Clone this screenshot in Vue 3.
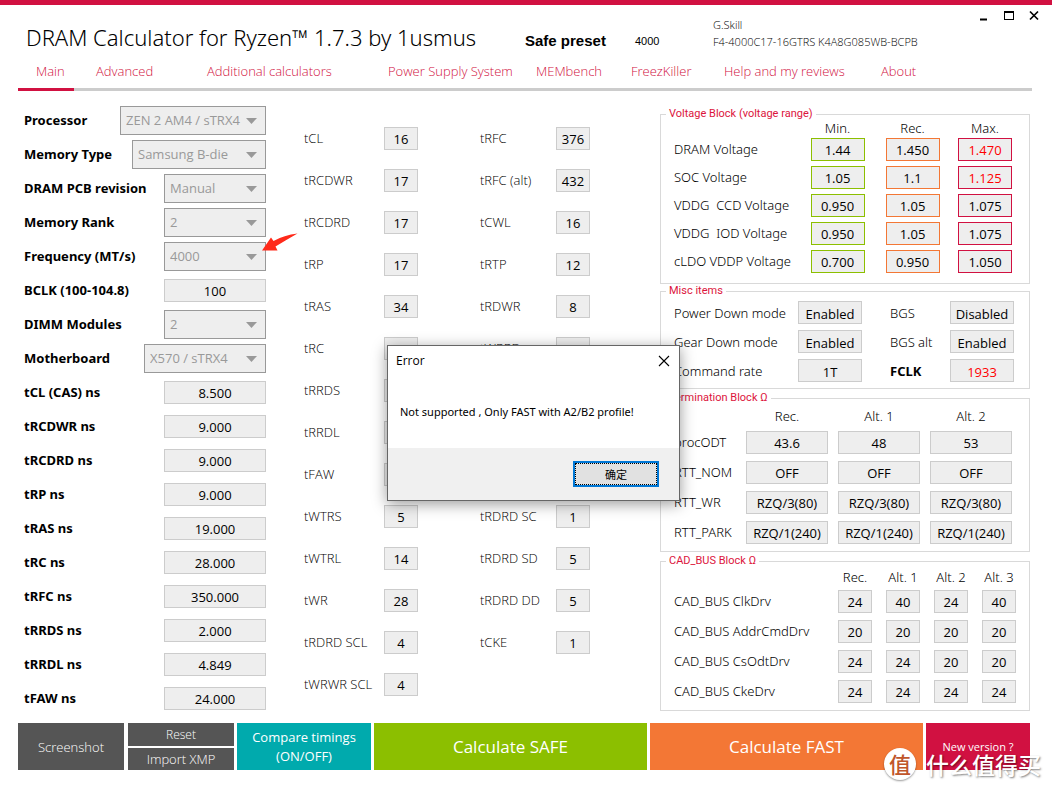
<script setup>
import { ref } from 'vue'

const tabs = [
  'Main',
  'Advanced',
  'Additional calculators',
  'Power Supply System',
  'MEMbench',
  'FreezKiller',
  'Help and my reviews',
  'About',
]

const settings = [
  { id: 'cpu', label: 'Processor', value: 'ZEN 2 AM4 / sTRX4', select: 'wide' },
  { id: 'memtype', label: 'Memory Type', value: 'Samsung B-die', select: 'type' },
  { id: 'pcb', label: 'DRAM PCB revision', value: 'Manual', select: 'std' },
  { id: 'rank', label: 'Memory Rank', value: '2', select: 'std' },
  { id: 'freq', label: 'Frequency (MT/s)', value: '4000', select: 'std', arrow: true },
  { id: 'bclk', label: 'BCLK (100-104.8)', value: '100' },
  { id: 'dimm', label: 'DIMM Modules', value: '2', select: 'std' },
  { id: 'board', label: 'Motherboard', value: 'X570 / sTRX4', select: 'board' },
  { id: 'tclns', label: 'tCL (CAS) ns', value: '8.500' },
  { id: 'trcdwrns', label: 'tRCDWR ns', value: '9.000' },
  { id: 'trcdrdns', label: 'tRCDRD ns', value: '9.000' },
  { id: 'trpns', label: 'tRP ns', value: '9.000' },
  { id: 'trasns', label: 'tRAS ns', value: '19.000' },
  { id: 'trcns', label: 'tRC ns', value: '28.000' },
  { id: 'trfcns', label: 'tRFC ns', value: '350.000' },
  { id: 'trrdsns', label: 'tRRDS ns', value: '2.000' },
  { id: 'trrdlns', label: 'tRRDL ns', value: '4.849' },
  { id: 'tfawns', label: 'tFAW ns', value: '24.000' },
]

const timings = [
  [
    ['tCL', '16'], ['tRCDWR', '17'], ['tRCDRD', '17'], ['tRP', '17'], ['tRAS', '34'],
    ['tRC', '54'], ['tRRDS', '4'], ['tRRDL', '6'], ['tFAW', '16'], ['tWTRS', '5'],
    ['tWTRL', '14'], ['tWR', '28'], ['tRDRD SCL', '4'], ['tWRWR SCL', '4'],
  ],
  [
    ['tRFC', '376'], ['tRFC (alt)', '432'], ['tCWL', '16'], ['tRTP', '12'], ['tRDWR', '8'],
    ['tWRRD', '4'], ['tWRWR SC', '1'], ['tWRWR SD', '7'], ['tWRWR DD', '7'], ['tRDRD SC', '1'],
    ['tRDRD SD', '5'], ['tRDRD DD', '5'], ['tCKE', '1'],
  ],
]

const voltages = [
  ['DRAM Voltage', '1.44', '1.450', '1.470', true],
  ['SOC Voltage', '1.05', '1.1', '1.125', true],
  ['VDDG\u00a0 CCD Voltage', '0.950', '1.05', '1.075', false],
  ['VDDG\u00a0 IOD Voltage', '0.950', '1.05', '1.075', false],
  ['cLDO VDDP Voltage', '0.700', '0.950', '1.050', false],
]

const misc = [
  { label: 'Power Down mode', value: 'Enabled' },
  { label: 'BGS', value: 'Disabled' },
  { label: 'Gear Down mode', value: 'Enabled' },
  { label: 'BGS alt', value: 'Enabled' },
  { label: 'Command rate', value: '1T' },
  { label: 'FCLK', value: '1933', strong: true },
]

const termination = [
  ['procODT', '43.6', '48', '53'],
  ['RTT_NOM', 'OFF', 'OFF', 'OFF'],
  ['RTT_WR', 'RZQ/3(80)', 'RZQ/3(80)', 'RZQ/3(80)'],
  ['RTT_PARK', 'RZQ/1(240)', 'RZQ/1(240)', 'RZQ/1(240)'],
]

const cadBus = [
  ['CAD_BUS ClkDrv', '24', '40', '24', '40'],
  ['CAD_BUS AddrCmdDrv', '20', '20', '20', '20'],
  ['CAD_BUS CsOdtDrv', '24', '24', '20', '20'],
  ['CAD_BUS CkeDrv', '24', '24', '24', '24'],
]

const termHeads = ['Rec.', 'Alt. 1', 'Alt. 2']
const cadHeads = ['Rec.', 'Alt. 1', 'Alt. 2', 'Alt. 3']

const showError = ref(true)
</script>

<template>
  <div class="window">
    <header class="titlebar">
      <h1>DRAM Calculator for Ryzen™ 1.7.3 by 1usmus</h1>
      <strong class="preset">Safe preset</strong>
      <span class="speed">4000</span>
      <div class="module">
        <div>G.Skill</div>
        <div>F4-4000C17-16GTRS K4A8G085WB-BCPB</div>
      </div>
      <div class="controls">
        <button type="button" aria-label="Minimize">
          <svg width="12" height="12" viewBox="0 0 12 12"><path d="M3 8.5h7v2H3z" /></svg>
        </button>
        <button type="button" aria-label="Maximize">
          <svg width="12" height="12" viewBox="0 0 12 12"><path d="M1 1h10v9H1zM2 3v6h8V3z" fill-rule="evenodd" /></svg>
        </button>
        <button type="button" aria-label="Close">
          <svg width="12" height="12" viewBox="0 0 12 12"><path d="M2 1.5l8 8M10 1.5l-8 8" stroke="#000" stroke-width="1.7" /></svg>
        </button>
      </div>
    </header>

    <nav class="tabs">
      <a v-for="(tab, i) in tabs" :key="tab" href="#" :class="{ active: i === 0 }">{{ tab }}</a>
    </nav>

    <main>
      <section class="settings">
        <div v-for="s in settings" :key="s.id" class="setting">
          <label :for="s.id">{{ s.label }}</label>
          <div v-if="s.select" class="select" :class="s.select">
            <select :id="s.id" disabled>
              <option>{{ s.value }}</option>
            </select>
            <svg class="caret" width="11" height="6" viewBox="0 0 11 6"><path d="M0 0h11L5.5 6z" /></svg>
            <svg v-if="s.arrow" class="pointer" width="36" height="20" viewBox="0 0 36 20">
              <path d="M0 17.5L9 4.5L11.5 8Q22 2 35.5 0.5Q25 6.5 13.5 13.5L15.5 17.5z" />
            </svg>
          </div>
          <input v-else :id="s.id" class="box ns" type="text" :value="s.value" readonly />
        </div>
      </section>

      <section class="timings">
        <div v-for="(col, c) in timings" :key="c">
          <div v-for="[name, value] in col" :key="name" class="timing">
            <label :for="`t-${name}`">{{ name }}</label>
            <input :id="`t-${name}`" class="box small" type="text" :value="value" readonly />
          </div>
        </div>
      </section>

      <section class="blocks">
        <fieldset class="voltage">
          <legend>Voltage Block (voltage range)</legend>
          <table>
            <thead>
              <tr>
                <td></td>
                <th scope="col">Min.</th>
                <th scope="col">Rec.</th>
                <th scope="col" class="last">Max.</th>
              </tr>
            </thead>
            <tbody>
              <tr v-for="[name, min, rec, max, hot] in voltages" :key="name">
                <th scope="row">{{ name }}</th>
                <td><input class="box volt min" type="text" :aria-label="`${name} Min.`" :value="min" readonly /></td>
                <td><input class="box volt rec" type="text" :aria-label="`${name} Rec.`" :value="rec" readonly /></td>
                <td><input class="box volt max" :class="{ hot }" type="text" :aria-label="`${name} Max.`" :value="max" readonly /></td>
              </tr>
            </tbody>
          </table>
        </fieldset>

        <fieldset class="misc">
          <legend>Misc items</legend>
          <div class="misc-grid">
            <template v-for="m in misc" :key="m.label">
              <label :for="`m-${m.label}`" :class="{ strong: m.strong }">{{ m.label }}</label>
              <input :id="`m-${m.label}`" class="box mode" :class="{ hot: m.strong }" type="text" :value="m.value" readonly />
            </template>
          </div>
        </fieldset>

        <fieldset class="term">
          <legend>Termination Block Ω</legend>
          <table>
            <thead>
              <tr>
                <td></td>
                <th v-for="h in termHeads" :key="h" scope="col">{{ h }}</th>
              </tr>
            </thead>
            <tbody>
              <tr v-for="[name, ...vals] in termination" :key="name">
                <th scope="row">{{ name }}</th>
                <td v-for="(v, i) in vals" :key="i">
                  <input class="box res" type="text" :aria-label="`${name} ${termHeads[i]}`" :value="v" readonly />
                </td>
              </tr>
            </tbody>
          </table>
        </fieldset>

        <fieldset class="cad">
          <legend>CAD_BUS Block Ω</legend>
          <table>
            <thead>
              <tr>
                <td></td>
                <th v-for="h in cadHeads" :key="h" scope="col">{{ h }}</th>
              </tr>
            </thead>
            <tbody>
              <tr v-for="[name, ...vals] in cadBus" :key="name">
                <th scope="row">{{ name }}</th>
                <td v-for="(v, i) in vals" :key="i">
                  <input class="box small" type="text" :aria-label="`${name} ${cadHeads[i]}`" :value="v" readonly />
                </td>
              </tr>
            </tbody>
          </table>
        </fieldset>
      </section>
    </main>

    <footer class="actions">
      <button type="button" class="grey">Screenshot</button>
      <div class="stack">
        <button type="button" class="grey reset">Reset</button>
        <button type="button" class="grey">Import XMP</button>
      </div>
      <button type="button" class="teal">Compare timings<br />(ON/OFF)</button>
      <button type="button" class="green">Calculate SAFE</button>
      <button type="button" class="orange">Calculate FAST</button>
      <button type="button" class="red">New version ?</button>
      <div class="watermark">
        <span class="badge">值</span>
        <span class="brand">什么值得买</span>
      </div>
    </footer>

    <section v-if="showError" class="dialog" role="dialog" aria-labelledby="error-title">
      <div class="dialog-head">
        <span id="error-title">Error</span>
        <button type="button" aria-label="Close dialog" @click="showError = false">
          <svg width="12" height="12" viewBox="0 0 12 12"><path d="M1 1l10 10M11 1L1 11" stroke="#000" stroke-width="1.1" /></svg>
        </button>
      </div>
      <p>Not supported , Only FAST with A2/B2 profile!</p>
      <div class="dialog-foot">
        <button type="button" class="ok" @click="showError = false"><span>确定</span></button>
      </div>
    </section>
  </div>
</template>

<style>
body {
  margin: 0;
  background: #fff;
}
</style>

<style scoped>
* {
  box-sizing: border-box;
}

.window {
  position: relative;
  min-height: 100vh;
  border-top: 5px solid #d11141;
  background: #fff;
  color: #000;
  font-family: "Open Sans", "Noto Sans", "Noto Sans CJK SC", sans-serif;
  font-size: 13px;
  font-weight: 300;
}

button {
  padding: 0;
  border: 0;
  background: none;
  font: inherit;
}

/* Header */
.titlebar {
  display: grid;
  grid-template-columns: 499fr 110fr 78fr 254fr 75fr;
  height: 54px;
  padding: 0 10px 0 26px;
  white-space: nowrap;
}

h1 {
  margin: 16px 0 0;
  font-family: "Noto Sans", "Open Sans", sans-serif;
  font-size: 22px;
  line-height: 32px;
  font-weight: 300;
}

.preset {
  margin-top: 26px;
  font: bold 15px/20px "Liberation Sans", Arial, sans-serif;
}

.speed {
  margin-top: 26px;
  font: 11px/20px "Liberation Sans", Arial, sans-serif;
}

.module {
  margin-top: 11px;
  font-size: 11px;
  line-height: 17px;
}

.controls {
  display: flex;
  justify-content: space-between;
  align-items: flex-start;
  padding: 5px 2px 0 10px;
}

.controls button {
  height: 12px;
}

svg {
  display: block;
}

/* Tabs */
.tabs {
  display: grid;
  grid-template-columns: 60fr 111fr 181fr 148fr 95fr 93fr 157fr 169fr;
  margin: 0 20px 0 18px;
  border-bottom: 3px solid #ccc;
  white-space: nowrap;
}

.tabs a {
  margin: 0 4px -3px 0;
  padding: 0 0 5px 18px;
  border-bottom: 3px solid transparent;
  color: #d11141;
  line-height: 24px;
  text-decoration: none;
}

.tabs a.active {
  border-bottom-color: #d11141;
}

/* Columns */
main {
  display: grid;
  grid-template-columns: 280fr 356fr 370fr;
  padding: 12px 22px 0 24px;
}

.settings {
  padding-right: 38px;
}

.setting {
  display: flex;
  align-items: center;
  justify-content: space-between;
  height: 34px;
  white-space: nowrap;
}

.setting label {
  font-family: "Noto Sans", "Open Sans", sans-serif;
  font-weight: 700;
}

.select {
  position: relative;
  width: 102px;
}

.select.wide {
  width: 146px;
}

.select.type {
  width: 134px;
}

.select.board {
  width: 122px;
}

select {
  display: block;
  width: 100%;
  height: 29px;
  margin: 0;
  padding: 0 0 0 5px;
  border: 1px solid #999;
  border-radius: 0;
  background: #eee;
  color: #999;
  font: 400 13px "Open Sans", sans-serif;
  opacity: 1;
  appearance: none;
}

.caret {
  position: absolute;
  top: 12px;
  right: 9px;
  fill: #999;
  pointer-events: none;
}

.pointer {
  position: absolute;
  top: -9px;
  left: 98px;
  fill: #ff2a1a;
  pointer-events: none;
}

.box {
  display: block;
  height: 23px;
  margin: 0;
  padding: 2px 0 0;
  border: 1px solid #ccc;
  border-radius: 0;
  background: #eee;
  color: #000;
  font: 400 13px "Open Sans", sans-serif;
  text-align: center;
  outline: 0;
}

.ns {
  width: 102px;
}

.small {
  width: 34px;
}

.timings {
  display: grid;
  grid-template-columns: 114fr 110fr;
  column-gap: 62px;
  align-content: start;
  padding: 14px 70px 0 0;
  white-space: nowrap;
}

.timing {
  display: flex;
  align-items: center;
  justify-content: space-between;
  height: 42px;
}

/* Blocks */
.blocks {
  padding-top: 4px;
}

fieldset {
  min-width: 0;
  margin: 0;
  padding: 0 0 0 13px;
  border: 1px solid #d9d9d9;
  white-space: nowrap;
}

legend {
  margin-left: -8px;
  padding: 0 3px;
  color: #dc143c;
  font: 11px/14px Roboto, "Liberation Sans", sans-serif;
}

table {
  width: 100%;
  border-collapse: collapse;
  table-layout: fixed;
}

th,
td {
  padding: 0;
  font-weight: 300;
  text-align: center;
}

th[scope="row"],
thead td {
  text-align: left;
}

td .box {
  margin: 0 auto;
}

.blocks th,
.blocks label {
  font-family: "Noto Sans", "Open Sans", sans-serif;
}

.voltage {
  padding-right: 9px;
  padding-bottom: 8px;
}

.voltage th[scope="col"] {
  width: 75px;
}

.voltage th.last {
  width: 70px;
}

.voltage thead tr {
  height: 14px;
  line-height: 14px;
}

.voltage tbody tr {
  height: 28px;
}

.volt {
  width: 54px;
}

.volt.min {
  border-color: #8cbf00;
}

.volt.rec {
  border-color: #f37735;
}

.volt.max {
  border-color: #d11141;
}

.hot {
  color: #f00;
}

.misc {
  padding-right: 15px;
  padding-bottom: 3px;
}

.misc-grid {
  display: grid;
  grid-template-columns: 1fr 64px 88px 64px;
  grid-auto-rows: 29px;
  align-items: center;
}

.misc-grid label:nth-of-type(even) {
  padding-left: 28px;
}

.misc-grid .strong {
  font-weight: 700;
}

.mode {
  width: 100%;
}

.term {
  margin-top: 2px;
  padding-right: 12px;
  padding-bottom: 4px;
}

.term th[scope="col"] {
  width: 92px;
}

.term thead tr {
  height: 22px;
}

.term tbody tr,
.cad tbody tr {
  height: 30px;
}

.res {
  width: 82px;
}

.cad {
  margin-top: 2px;
  padding-right: 6px;
  padding-bottom: 4px;
}

.cad th[scope="col"] {
  width: 48px;
}

.cad thead tr {
  height: 18px;
  line-height: 18px;
}

/* Footer */
.actions {
  position: relative;
  display: grid;
  grid-template-columns: 107fr 106fr 134fr 273fr 273fr 104fr;
  column-gap: 3px;
  height: 47px;
  margin: 8px 22px 0 18px;
}

.actions button {
  color: #fff;
  white-space: nowrap;
}

.actions > .grey {
  margin-right: 1px;
}

.stack {
  display: grid;
  grid-template-rows: 1fr 1fr;
  row-gap: 2px;
}

.grey {
  background: #555;
}

.actions .reset {
  font-size: 12px;
}

.teal {
  background: #00aaad;
  font-weight: 400;
  line-height: 19px;
}

.green,
.orange {
  font-size: 17px;
  font-weight: 400;
}

.green {
  background: #8cbf00;
}

.orange {
  background: #f37735;
}

.red {
  background: #d11141;
  font-size: 11px;
  font-weight: 400;
}

.watermark {
  position: absolute;
  right: -11px;
  bottom: -12px;
  display: flex;
  align-items: center;
  gap: 10px;
  height: 36px;
  font-family: "Noto Sans CJK SC", sans-serif;
  font-weight: 500;
  pointer-events: none;
}

.badge {
  width: 32px;
  height: 32px;
  border-radius: 50%;
  background: #fff;
  box-shadow: 0 1px 2px rgba(0, 0, 0, 0.4);
  color: #c0562b;
  font-size: 22px;
  line-height: 31px;
  text-align: center;
}

.brand {
  color: #fff;
  font-size: 23px;
  text-shadow: 1px 1px 2px rgba(0, 0, 0, 0.5);
}

/* Message box */
.dialog {
  position: absolute;
  top: 340px;
  left: calc(50% - 139px);
  width: 293px;
  border: 1px solid #666;
  background: #fff;
  box-shadow: 0 3px 14px rgba(0, 0, 0, 0.4);
  font-size: 12px;
  font-weight: 400;
}

.dialog-head {
  display: flex;
  align-items: center;
  justify-content: space-between;
  height: 29px;
  padding: 0 9px 0 8px;
}

.dialog p {
  margin: 0;
  padding: 27px 12px 26px;
  font-family: "Noto Sans", "Open Sans", sans-serif;
  font-size: 11px;
  line-height: 20px;
  white-space: nowrap;
}

.dialog-foot {
  display: flex;
  justify-content: flex-end;
  padding: 13px 20px;
  background: #f0f0f0;
}

.ok {
  width: 86px;
  height: 26px;
  border: 2px solid #0078d7;
  background: #e1e1e1;
  font: 11px "Noto Sans CJK SC", sans-serif;
}

.ok span {
  display: block;
  height: 22px;
  border: 1px dotted #000;
  line-height: 20px;
}
</style>
